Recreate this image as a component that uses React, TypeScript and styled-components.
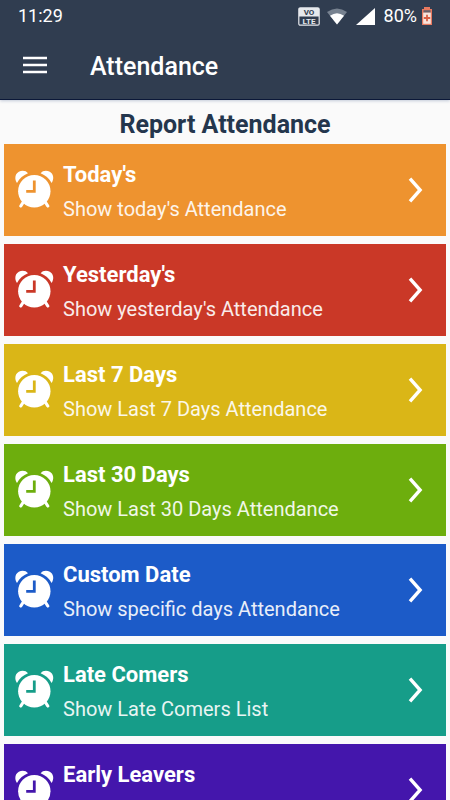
import React from "react";
import styled, { createGlobalStyle } from "styled-components";

const GlobalStyle = createGlobalStyle`
  *, *::before, *::after { box-sizing: border-box; }
  body {
    margin: 0;
    background: #fafafa;
    font-family: Roboto, "Liberation Sans", sans-serif;
  }
`;

const Screen = styled.div`
  display: flex;
  flex-direction: column;
  height: 100vh;
  overflow: hidden;
`;

const TopArea = styled.div`
  flex: none;
  background: #303d50;
  color: #ffffff;
  border-bottom: 1px solid #0b1838;
  box-shadow: 0 1px 3px #c3cad8;
`;

const StatusBar = styled.div`
  display: flex;
  align-items: center;
  justify-content: space-between;
  height: 32px;
  padding: 0 17px 0 18px;
  font-size: 18px;
  line-height: 32px;
`;

const StatusIcons = styled.div`
  display: flex;
  align-items: center;
`;

const StatusIcon = styled.svg<{ $gap: number }>`
  display: block;
  margin-right: ${(p) => p.$gap}px;
`;

const AppBar = styled.header`
  display: flex;
  align-items: center;
  gap: 43px;
  height: 67px;
  padding: 0 23px;
`;

const MenuButton = styled.button`
  display: block;
  padding: 0 0 2px;
  border: 0;
  background: none;
  color: inherit;
  cursor: pointer;

  svg { display: block; }
`;

const AppTitle = styled.h1`
  margin: 0;
  padding-top: 2px;
  font-size: 25px;
  line-height: 32px;
  font-weight: 500;
`;

const Content = styled.main`
  flex: 1;
  min-height: 0;
  padding: 9px 4px 8px;
  overflow-y: auto;
  scrollbar-width: none;
`;

const Heading = styled.h2`
  margin: 0 0 3px;
  color: #24364d;
  font-size: 25px;
  line-height: 32px;
  font-weight: 700;
  text-align: center;
`;

const CardList = styled.div`
  display: flex;
  flex-direction: column;
  gap: 8px;
`;

const Card = styled.button<{ $color: string }>`
  display: flex;
  flex: none;
  align-items: center;
  gap: 8px;
  width: 100%;
  height: 92px;
  padding: 0 22px 0 11px;
  border: 0;
  background: ${(p) => p.$color};
  color: #ffffff;
  font-family: inherit;
  text-align: left;
  cursor: pointer;

  svg { display: block; flex: none; }
`;

const CardText = styled.span`
  display: flex;
  flex: 1;
  flex-direction: column;
  gap: 6px;
  padding-top: 4px;
`;

const CardTitle = styled.span`
  font-size: 22px;
  line-height: 28px;
  font-weight: 700;
`;

const CardSubtitle = styled.span`
  font-size: 20px;
  line-height: 28px;
  opacity: 0.9;
`;

const reports = [
  { title: "Today's", subtitle: "Show today's Attendance", color: "#ee932f" },
  { title: "Yesterday's", subtitle: "Show yesterday's Attendance", color: "#ca3827" },
  { title: "Last 7 Days", subtitle: "Show Last 7 Days Attendance", color: "#dab617" },
  { title: "Last 30 Days", subtitle: "Show Last 30 Days Attendance", color: "#6dae0d" },
  { title: "Custom Date", subtitle: "Show specific days Attendance", color: "#1c5bc8" },
  { title: "Late Comers", subtitle: "Show Late Comers List", color: "#169d89" },
  { title: "Early Leavers", subtitle: "Show Early Leavers List", color: "#4416ac" },
];

function AlarmClock({ color }: { color: string }) {
  return (
    <svg width="40" height="40" viewBox="0 0 40 40" aria-hidden="true">
      <g fill="#fff">
        <path d="M2 13C-.8 9 0 4 3.8 1.8 7 0 11 .6 13 3.2 8.3 5 4.4 8.3 2 13Z" />
        <path d="M36.6 13C39.4 9 38.6 4 34.8 1.8 31.6 0 27.6.6 25.6 3.2 30.3 5 34.2 8.3 36.6 13Z" />
        <circle cx="19.3" cy="21.3" r="16.2" />
      </g>
      <path d="M9 31 5.8 36M29.6 31 32.8 36" fill="none" stroke="#fff" strokeWidth="3.2" strokeLinecap="round" />
      <path d="M19.3 10.4V21.3H11.2" fill="none" stroke={color} strokeWidth="2.8" />
    </svg>
  );
}

function Chevron() {
  return (
    <svg width="16" height="26" viewBox="0 0 16 26" aria-hidden="true">
      <path d="M2 1.7 12.1 13 2 24.3" fill="none" stroke="#fff" strokeWidth="3.4" />
    </svg>
  );
}

export default function App() {
  return (
    <Screen>
      <GlobalStyle />
      <TopArea>
        <StatusBar>
          <span>11:29</span>
          <StatusIcons>
            <StatusIcon $gap={7} width="22" height="19" viewBox="0 0 22 19" role="img" aria-label="VoLTE">
              <rect x=".8" y=".8" width="20.4" height="17.4" rx="1.5" fill="#303d50" stroke="#e6e9ed" strokeWidth="1.2" />
              <path d="M1 1h20v8.5H1z" fill="#e6e9ed" />
              <text x="11" y="8.4" textAnchor="middle" fontSize="8" fontWeight="700" fill="#303d50">VO</text>
              <text x="11" y="16.8" textAnchor="middle" fontSize="8" fontWeight="700" fill="#e6e9ed">LTE</text>
            </StatusIcon>
            <StatusIcon $gap={9} width="20" height="17" viewBox="0 0 20 17" role="img" aria-label="Wi-Fi">
              <path d="M0 4Q10-3 20 4L10 16.5Z" fill="#778290" />
              <path d="M3 7.8Q10 2.5 17 7.8L10 16.5Z" fill="#fff" />
            </StatusIcon>
            <StatusIcon $gap={9} width="19" height="17" viewBox="0 0 19 17" role="img" aria-label="Mobile signal">
              <path d="M19 0V17H0Z" fill="#fff" />
            </StatusIcon>
            <span>80%</span>
            <StatusIcon $gap={0} width="16" height="18" viewBox="1 0 16 18" role="img" aria-label="Battery charging">
              <path d="M8 0h6v2h2v16H6V2h2Z" fill="#e8795f" />
              <path d="M7.5 3.2h7v2.6h-7z" fill="#69616a" />
              <path d="M7.2 5.6h7.6v11.2H7.2z" fill="#f8e4dc" />
              <path d="M11 7.8v6.4M7.8 11h6.4" stroke="#d95f45" strokeWidth="1.8" />
            </StatusIcon>
          </StatusIcons>
        </StatusBar>
        <AppBar>
          <MenuButton type="button" aria-label="Open menu">
            <svg width="24" height="18" viewBox="0 0 24 18" aria-hidden="true">
              <path d="M0 2h24M0 9h24M0 16h24" stroke="currentColor" strokeWidth="2.5" />
            </svg>
          </MenuButton>
          <AppTitle>Attendance</AppTitle>
        </AppBar>
      </TopArea>
      <Content>
        <Heading>Report Attendance</Heading>
        <CardList>
          {reports.map((report) => (
            <Card key={report.title} type="button" $color={report.color}>
              <AlarmClock color={report.color} />
              <CardText>
                <CardTitle>{report.title}</CardTitle>
                <CardSubtitle>{report.subtitle}</CardSubtitle>
              </CardText>
              <Chevron />
            </Card>
          ))}
        </CardList>
      </Content>
    </Screen>
  );
}
